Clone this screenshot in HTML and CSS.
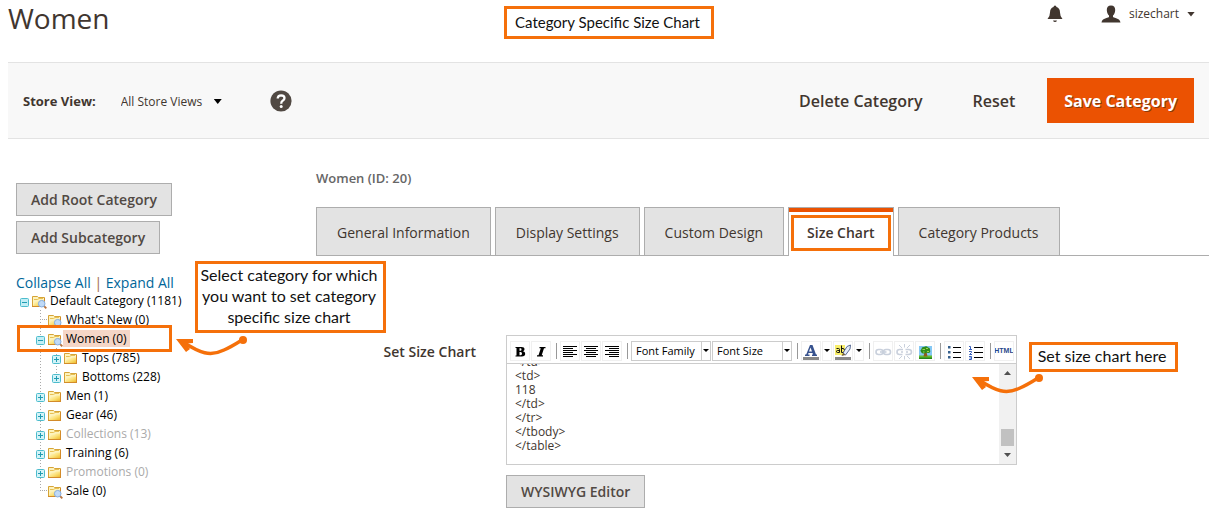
FILE: index.html
```html
<!DOCTYPE html>
<html lang="en">
<head>
<meta charset="utf-8">
<title>Women / Categories</title>
<link rel="stylesheet" href="styles.css">
</head>
<body>
<svg class="defs" aria-hidden="true">
  <defs>
    <linearGradient id="gold" x1="0" y1="0" x2="1" y2="1">
      <stop offset="0" stop-color="#fffbd8"/><stop offset=".55" stop-color="#fbe27c"/><stop offset="1" stop-color="#eebb2c"/>
    </linearGradient>
    <symbol id="folder" viewBox="0 0 16 16">
      <path d="M1.500 13.500V3.500H6.500L7.500 4.500H13.500V13.500Z" fill="#fdf3bd" stroke="#d6a437"/>
      <path d="M3 6.500H6.500L8 5.500H12" fill="none" stroke="#e7bf53"/>
      <path d="M2 13L4 8.500H7.500L9 7.500H13V13Z" fill="url(#gold)"/>
      <path d="M1 13.500H14M13.500 5V14" stroke="#d38b2a" fill="none"/>
    </symbol>
    <symbol id="folder-view" viewBox="0 0 16 16">
      <use href="#folder"/>
      <path d="M12.500 12.500L15.300 15.300" stroke="#b87440" stroke-width="1.800"/>
      <circle cx="10.700" cy="10.700" r="3.300" fill="#c0daf7" stroke="#86aee0"/>
    </symbol>
    <symbol id="plus" viewBox="0 0 9 9">
      <rect x=".5" y=".5" width="8" height="8" rx="1" fill="#d3f3f8" stroke="#4dbccd"/>
      <path d="M2 4.500H7M4.500 2V7" stroke="#219cb2"/>
    </symbol>
    <symbol id="minus" viewBox="0 0 9 9">
      <rect x=".5" y=".5" width="8" height="8" rx="1" fill="#c3eef5" stroke="#4dbccd"/>
      <path d="M2 4.500H7" stroke="#219cb2"/>
    </symbol>
    <symbol id="arrow" viewBox="0 0 72 24">
      <path d="M7 7C24 18 34 22 48 15Q55 12 66 5" fill="none" stroke="#f5700a" stroke-width="3.400"/>
      <path d="M0 4L17 4L17 8L10 8.500L14 14L10 17Z" fill="#f5700a"/>
      <circle cx="67" cy="5" r="4" fill="#f5700a"/>
    </symbol>
  </defs>
</svg>

<div class="page">
  <header class="top">
    <h1>Women</h1>
    <div class="user">
      <button class="plain" aria-label="Notifications"><svg width="16" height="18" viewBox="0 0 16 18"><path d="M8 .5Q9.300 .5 9.500 2Q13 3 13 7.500Q13 11.500 15.500 14H.5Q3 11.500 3 7.500Q3 3 6.500 2Q6.700 .5 8 .5ZM6 15.500H10Q9.500 17 8 17T6 15.500Z" fill="#41362f"/></svg></button>
      <button class="plain account"><svg width="20" height="18" viewBox="0 0 20 18"><path d="M10 .5C13 .5 14.300 2.500 14.200 5C14.100 8 13 9.500 12 10.500V12C14 13.200 19 13.500 19.500 17.500H.5C1 13.500 6 13.200 8 12V10.500C7 9.500 5.900 8 5.800 5C5.700 2.500 7 .5 10 .5Z" fill="#41362f"/></svg><span>sizechart</span><i class="caret"></i></button>
    </div>
  </header>

  <div class="actions">
    <label class="store-label" for="store">Store View:</label>
    <div class="store"><select id="store"><option>All Store Views</option></select><i class="caret black"></i></div>
    <a class="help" href="#" aria-label="Help"><svg width="22" height="22" viewBox="0 0 22 22"><circle cx="11" cy="11" r="10.600" fill="#514943"/><path d="M7.700 8.500Q7.800 5.300 11.200 5.300Q14.500 5.400 14.500 8.100Q14.500 9.600 12.900 10.600Q11.200 11.600 11.200 13.700" fill="none" stroke="#fff" stroke-width="2.300"/><circle cx="11.200" cy="16.600" r="1.500" fill="#fff"/></svg></a>
    <div class="main-actions">
      <button class="plain">Delete Category</button>
      <button class="plain">Reset</button>
      <button class="save">Save Category</button>
    </div>
  </div>

  <div class="columns">
    <aside>
      <button class="secondary">Add Root Category</button>
      <button class="secondary">Add Subcategory</button>
      <div class="tree-links"><a href="#">Collapse All</a> <span>|</span> <a href="#">Expand All</a></div>
      <ul class="tree">
        <li>
          <div class="node"><svg class="tog"><use href="#minus"/></svg><svg class="ico"><use href="#folder-view"/></svg><a href="#">Default Category (1181)</a></div>
          <ul class="branch">
            <li><div class="node"><i class="leaf"></i><svg class="ico"><use href="#folder-view"/></svg><a href="#">What's New (0)</a></div></li>
            <li>
              <div class="node"><svg class="tog"><use href="#minus"/></svg><svg class="ico"><use href="#folder-view"/></svg><a class="selected" href="#">Women (0)</a></div>
              <ul class="branch">
                <li><div class="node"><svg class="tog"><use href="#plus"/></svg><svg class="ico"><use href="#folder"/></svg><a href="#">Tops (785)</a></div></li>
                <li><div class="node"><svg class="tog"><use href="#plus"/></svg><svg class="ico"><use href="#folder"/></svg><a href="#">Bottoms (228)</a></div></li>
              </ul>
            </li>
            <li><div class="node"><svg class="tog"><use href="#plus"/></svg><svg class="ico"><use href="#folder"/></svg><a href="#">Men (1)</a></div></li>
            <li><div class="node"><svg class="tog"><use href="#plus"/></svg><svg class="ico"><use href="#folder"/></svg><a href="#">Gear (46)</a></div></li>
            <li><div class="node"><svg class="tog"><use href="#plus"/></svg><svg class="ico"><use href="#folder"/></svg><a class="off" href="#">Collections (13)</a></div></li>
            <li><div class="node"><svg class="tog"><use href="#plus"/></svg><svg class="ico"><use href="#folder"/></svg><a href="#">Training (6)</a></div></li>
            <li><div class="node"><svg class="tog"><use href="#plus"/></svg><svg class="ico"><use href="#folder"/></svg><a class="off" href="#">Promotions (0)</a></div></li>
            <li><div class="node"><i class="leaf"></i><svg class="ico"><use href="#folder-view"/></svg><a href="#">Sale (0)</a></div></li>
          </ul>
        </li>
      </ul>
    </aside>

    <main>
      <h2>Women (ID: 20)</h2>
      <nav class="tabs">
        <a href="#">General Information</a>
        <a href="#">Display Settings</a>
        <a href="#">Custom Design</a>
        <a class="active" href="#">Size Chart</a>
        <a href="#">Category Products</a>
      </nav>
      <div class="field">
        <label for="chart">Set Size Chart</label>
        <div class="control">
          <div class="editor">
            <div class="toolbar">
              <button class="tool" aria-label="Bold"><svg viewBox="0 0 20 20"><path d="M5.500 6H11.500Q14.500 6 14.500 8.300Q14.500 10 13 10.300Q15.200 10.700 15.200 12.800Q15.200 15.500 11.800 15.500H5.500V14.500H6.500V7H5.500ZM9.500 7.200V9.800H10.500Q11.500 9.700 11.500 8.500T10.500 7.200ZM9.500 11V14.300H10.700Q12 14.200 12 12.600T10.700 11Z" fill-rule="evenodd"/></svg></button>
              <button class="tool" aria-label="Italic"><svg viewBox="0 0 20 20"><path d="M8.500 6H14.500V7.200H13L10.700 14.300H12V15.500H6V14.300H7.500L9.800 7.200H8.500Z"/></svg></button>
              <i class="sep"></i>
              <button class="tool" aria-label="Align left"><svg viewBox="0 0 20 20"><path d="M3 5.500H17M3 7.500H13M3 9.500H17M3 11.500H13M3 13.500H17M3 15.500H13" stroke="#000"/></svg></button>
              <button class="tool" aria-label="Align center"><svg viewBox="0 0 20 20"><path d="M3 5.500H17M5 7.500H15M3 9.500H17M5 11.500H15M3 13.500H17M5 15.500H15" stroke="#000"/></svg></button>
              <button class="tool" aria-label="Align right"><svg viewBox="0 0 20 20"><path d="M3 5.500H17M7 7.500H17M3 9.500H17M7 11.500H17M3 13.500H17M7 15.500H17" stroke="#000"/></svg></button>
              <i class="sep"></i>
              <div class="pick"><select aria-label="Font Family"><option>Font Family</option></select><i class="caret small"></i></div>
              <div class="pick"><select aria-label="Font Size"><option>Font Size</option></select><i class="caret small"></i></div>
              <i class="sep"></i>
              <button class="tool" aria-label="Text color"><svg viewBox="0 0 20 20"><path d="M9 4H11.500L15 13.500H16V15H11V13.500H12L11.500 12H7.500L7 13.500H8.500V15H4V13.500H5.200ZM9.500 6.500L8 10.500H11Z" fill="#38538f" fill-rule="evenodd"/><path d="M2 16H18V20H2Z" fill="#888"/></svg></button>
              <button class="tool more" aria-label="More text colors"><i class="caret small"></i></button>
              <button class="tool" aria-label="Highlight color"><svg viewBox="0 0 20 20"><path d="M2 4H12V14H2Z" fill="#f8ee6a"/><path d="M3.500 7.500H5.500Q6.500 7.500 6.500 8.500V11.500H4.500Q3.500 11.500 3.500 10.500T4.500 9.500H6.500M8.500 4.500V11.500H10Q11.500 11.500 11.500 9.500T10 7.500H8.500" fill="none" stroke="#111"/><path d="M10 12L14 5.500L17.500 4L17 8L12.500 14Z" fill="#e5edfa" stroke="#5a6c94"/><path d="M8.500 15L10 12L12.500 14Z" fill="#735d31"/><path d="M2 16H18V20H2Z" fill="#888"/></svg></button>
              <button class="tool more" aria-label="More highlight colors"><i class="caret small"></i></button>
              <i class="sep"></i>
              <button class="tool" aria-label="Insert link"><svg viewBox="0 0 20 20" fill="none" stroke="#c9d0dc" stroke-width="1.600"><rect x="3" y="8.500" width="7" height="5" rx="2.500"/><rect x="10.500" y="8.500" width="7" height="5" rx="2.500"/><path d="M7 11H13.500"/></svg></button>
              <button class="tool" aria-label="Unlink"><svg viewBox="0 0 20 20" fill="none" stroke="#c9d0dc" stroke-width="1.600"><path d="M9 8.500H5.500Q3 8.500 3 11T5.500 13.500H8.500M11.500 8.500H14.500Q17.500 8.500 17.500 11T14.500 13.500H11.500M7 11H9M12 11H14"/><path d="M5 4L8 7M10.500 3V6.500M16 4L13 7M5 18L8 15M10.500 18.500V15M16 18L13 15" stroke-width="1"/></svg></button>
              <button class="tool" aria-label="Insert image"><svg viewBox="0 0 20 20"><path d="M4 5H17V18H4Z" fill="#85c8f4"/><path d="M4 14.500H17V18H4Z" fill="#62bd2e"/><path d="M4 16.500H17V18H4Z" fill="#258519"/><path d="M9.500 11H11.500L12.500 15.500H8.500Z" fill="#8c5c20"/><path d="M6 11Q4.500 9.500 6.500 8Q6.500 5.500 9 6Q11.500 4.500 13 6.500Q15.500 7 15 9Q16 11.500 13.500 12Q11 11.500 9.500 12.500Q7 13 6 11Z" fill="#2f8d1d"/><path d="M7.500 8.500H10M11 7.500H13M12 10.500H14M8 11H9.500" stroke="#9bd64a"/></svg></button>
              <i class="sep"></i>
              <button class="tool" aria-label="Bulleted list"><svg viewBox="0 0 20 20"><path d="M9 6.500H17M9 11.500H17M9 16.500H17" stroke="#000"/><path d="M4 5H6.500V7.500H4ZM4 10H6.500V12.500H4ZM4 15H6.500V17.500H4Z" fill="#37618e"/></svg></button>
              <button class="tool" aria-label="Numbered list"><svg viewBox="0 0 20 20"><path d="M9 6.500H18M9 11.500H18M9 16.500H18" stroke="#000"/><path d="M4 5.500H5.500V8.500M4 8.500H7M4 10.500H6.500V11.500L4.500 13.500H7M4 15.500H6.500V18.500H4M4.500 17H6.500" stroke="#3860bd" fill="none"/></svg></button>
              <i class="sep"></i>
              <button class="tool html">HTML</button>
            </div>
            <div class="source">
              <textarea id="chart" spellcheck="false">&lt;table&gt;
&lt;tbody&gt;
&lt;tr&gt;
&lt;td&gt;
Size
&lt;/td&gt;
&lt;td&gt;
Bust
&lt;/td&gt;
&lt;/tr&gt;
&lt;tr&gt;
&lt;td&gt;
XL
&lt;/td&gt;
&lt;td&gt;
118
&lt;/td&gt;
&lt;/tr&gt;
&lt;/tbody&gt;
&lt;/table&gt;</textarea>
              <div class="scrollbar" aria-hidden="true"><i class="up"></i><i class="thumb"></i><i class="down"></i></div>
            </div>
          </div>
          <button class="secondary">WYSIWYG Editor</button>
        </div>
      </div>
    </main>
  </div>

  <div class="note note-title">Category Specific Size Chart</div>
  <div class="note note-tree">Select category for which<br>you want to set category<br>specific size chart</div>
  <div class="note note-editor">Set size chart here</div>
  <div class="ring ring-tree"></div>
  <div class="ring ring-tab"></div>
  <svg class="pointer pointer-tree"><use href="#arrow"/></svg>
  <svg class="pointer pointer-editor"><use href="#arrow"/></svg>
</div>
<script src="script.js"></script>
</body>
</html>
```

FILE: styles.css
```css
* { box-sizing: border-box; }
body { margin: 0; background: #fff; color: #41362f; font: 14px/20px "Open Sans", "Noto Sans", sans-serif; }
button, select, textarea { font: inherit; color: inherit; margin: 0; border-radius: 0; }
button { cursor: pointer; white-space: nowrap; }
a { color: inherit; text-decoration: none; }
svg { display: block; flex: none; }
ul { list-style: none; margin: 0; padding: 0; }
.defs { position: absolute; width: 0; height: 0; }
.page { position: relative; padding: 0 9px 0 8px; }

.top { display: flex; justify-content: space-between; align-items: flex-start; min-height: 62px; }
h1 { margin: 0; font-size: 28px; line-height: 36px; font-weight: 400; }
.user { display: flex; gap: 38px; align-items: center; padding: 4px 14px 0 0; font-size: 12px; }
.plain { border: 0; padding: 0; background: none; }
.account { display: flex; align-items: center; gap: 8px; }
.caret { display: block; flex: none; width: 8px; height: 5px; background: #41362f; clip-path: polygon(0 0, 100% 0, 50% 100%); }
.caret.black { background: #000; }
.caret.small { width: 6px; height: 3px; background: #000; }

.actions { display: flex; align-items: center; min-height: 77px; padding: 0 15px; background: #f8f8f8; border: solid #e3e3e3; border-width: 1px 0; }
.store-label { font-size: 13px; font-weight: 700; }
.store { display: flex; align-items: center; gap: 11px; margin-left: 25px; padding-top: 2px; }
.store select { appearance: none; border: 0; padding: 0; background: none; font-size: 12px; }
.help { margin-left: 48px; }
.main-actions { display: flex; align-items: center; gap: 50px; margin-left: auto; font-size: 16px; font-weight: 600; }
.save { margin-left: -18px; height: 45px; padding: 0 17px; border: 0; background: #eb5202; color: #fff; font-weight: 700; text-shadow: 1px 1px 0 #8a3a0c; }

.columns { display: grid; grid-template-columns: 300px minmax(0, 1fr); padding-left: 8px; }
aside { display: flex; flex-direction: column; align-items: flex-start; gap: 5px; padding-top: 44px; }
.secondary { height: 33px; padding: 0 14px; border: 1px solid #adadad; background: #e3e3e3; color: #514943; font-weight: 600; }
.tree-links { margin-top: 14px; color: #006699; }
.tree-links span { color: #a1674d; }
.tree { margin: -7px 0 0 4px; color: #000; font-size: 12px; }
.branch { margin-left: 16px; background: repeating-linear-gradient(#aaa 0 1px, #fff 1px 3px) 4px 0 / 1px calc(100% - 8px) no-repeat; }
.node { display: flex; align-items: center; height: 19px; white-space: nowrap; }
.tog { width: 9px; height: 9px; margin: 4px 2px 0 0; }
.ico { width: 16px; height: 16px; }
.leaf { width: 7px; margin-left: 4px; border-top: 1px dotted #aaa; }
.node a { height: 17px; line-height: 17px; padding: 0 3px; }
.node .selected { background: #f5d6c7; }
.node .off { color: #aaa; }

main { padding-top: 29px; }
h2 { margin: 0; font-size: 13px; line-height: 20px; font-weight: 600; color: #666; }
.tabs { display: flex; gap: 4px; margin-top: 19px; border-bottom: 1px solid #adadad; }
.tabs a { height: 48px; padding: 0 20px; line-height: 50px; background: #e3e3e3; border: 1px solid #adadad; border-bottom: 0; white-space: nowrap; }
.tabs .active { height: 49px; margin-bottom: -1px; padding: 0 18px; background: #fff; box-shadow: inset 0 4px #eb5202; font-weight: 600; }
.field { display: grid; grid-template-columns: 160px minmax(0, 511px); gap: 30px; margin-top: 79px; }
.field label { text-align: right; font-weight: 600; padding-top: 7px; }
.control { display: flex; flex-direction: column; align-items: flex-start; gap: 10px; }
.editor { width: 100%; border: 1px solid #ccc; }
.toolbar { display: flex; align-items: center; gap: 1px; height: 28px; padding: 2px 3px 0; border-bottom: 1px solid #ccc; }
.tool { flex: none; display: flex; align-items: center; justify-content: center; width: 20px; height: 20px; padding: 0; border: 0; outline: 1px solid #f0f0f0; outline-offset: -1px; background: none; }
.tool svg { width: 20px; height: 20px; }
.tool.more { width: 10px; }
.tool.html { font: 700 7px/20px "Liberation Sans", sans-serif; color: #29488c; }
.sep { flex: none; width: 7px; height: 16px; background: linear-gradient(#999, #999) 4px 0 / 1px 100% no-repeat; }
.pick { flex: 0 0 80px; display: flex; align-items: center; height: 20px; border: 1px solid #ccc; padding-right: 1px; }
.pick select { flex: 1; min-width: 0; height: 18px; appearance: none; border: 0; border-right: 1px solid #ccc; margin-right: 1px; padding: 0 4px; background: none; color: #000; font-size: 11px; line-height: 18px; }
.source { display: flex; height: 100px; }
textarea { flex: 1; min-width: 0; border: 0; outline: 0; resize: none; padding: 4px 8px 11px; font-size: 12px; line-height: 14px; scrollbar-width: none; }
.scrollbar { display: flex; flex-direction: column; align-items: center; width: 17px; padding: 7px 0; background: #f1f1f1; }
.scrollbar .up, .scrollbar .down { width: 7px; height: 4px; background: #505050; clip-path: polygon(50% 0, 100% 100%, 0 100%); }
.scrollbar .down { clip-path: polygon(0 0, 100% 0, 50% 100%); }
.scrollbar .thumb { width: 13px; height: 17px; margin: auto 0 7px; background: #c1c1c1; }

/* Tutorial callouts laid over the screen */
.note { position: absolute; padding-right: 3px; border: 3px solid #f5700a; background: #fff; color: #111; font: 16px/21px Lato, sans-serif; text-align: center; white-space: nowrap; }
.note-title { left: 504px; top: 6px; width: 210px; height: 33px; font-size: 15px; line-height: 26px; }
.note-tree { left: 195px; top: 261px; width: 191px; height: 72px; }
.note-editor { left: 1029px; top: 342px; width: 149px; height: 30px; line-height: 22px; }
.ring { position: absolute; border: 3px solid #f5700a; pointer-events: none; }
.ring-tree { left: 17px; top: 325px; width: 155px; height: 27px; }
.ring-tab { left: 791px; top: 215px; width: 100px; height: 36px; }
.pointer { position: absolute; width: 72px; height: 24px; pointer-events: none; }
.pointer-tree { left: 176px; top: 335px; }
.pointer-editor { left: 972px; top: 373px; }
```

FILE: script.js
```js
const chart = document.getElementById("chart");
chart.scrollTop = chart.scrollHeight;
```
